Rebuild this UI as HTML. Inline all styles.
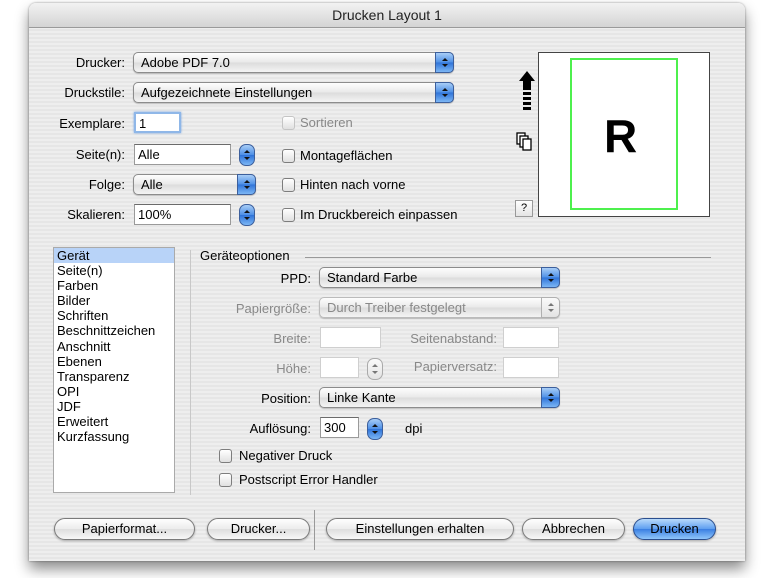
<!DOCTYPE html>
<html><head><meta charset="utf-8"><style>
*{margin:0;padding:0;box-sizing:border-box}
body{width:770px;height:578px;background:#fff;position:relative;overflow:hidden;font-family:"Liberation Sans",sans-serif;font-size:13px;color:#000}
.win{position:absolute;left:29px;top:3px;width:716px;height:558px;border-radius:7px 7px 0 0;background:repeating-linear-gradient(#eeeeee 0 2px,#e6e6e6 2px 4px);box-shadow:0 8px 14px rgba(0,0,0,.45),0 0 2px rgba(0,0,0,.4);overflow:hidden}
.tb{position:absolute;left:0;top:0;width:100%;height:25px;background:linear-gradient(#f2f2f2,#d4d4d4);border-bottom:1px solid #9a9a9a;text-align:center;font-size:14px;line-height:25px;color:#222}
.a{position:absolute;white-space:nowrap}
.l{position:absolute;text-align:right;white-space:nowrap;line-height:16px}
.pop{position:absolute;height:21px;border:1px solid #8c8c8c;border-radius:5px;background:linear-gradient(#fdfdfd,#e9e9e9 50%,#dcdcdc 51%,#f4f4f4);padding-left:7px;line-height:19px;box-shadow:0 1px 1px rgba(0,0,0,.2)}
.pop .ar{position:absolute;right:-1px;top:-1px;width:19px;height:21px;border-radius:0 5px 5px 0;background:linear-gradient(#a8cdf7,#4d8fe6 50%,#2f73d8 51%,#7bb6f5);border:1px solid #3c5f9c}
.ar:before,.ar:after{content:"";position:absolute;left:6px;border-left:3px solid transparent;border-right:3px solid transparent}
.ar:before{top:5px;border-bottom:3px solid #111}
.ar:after{top:11px;border-top:3px solid #111}
.dis{color:#888}
.dis .ar{background:linear-gradient(#fafafa,#e3e3e3);border-color:#b0b0b0}
.dis .ar:before{border-bottom-color:#777}.dis .ar:after{border-top-color:#777}
.pop.dis{border-color:#bbb}
.fld{position:absolute;height:21px;background:#fff;border:1px solid #9a9a9a;border-top-color:#6b6b6b;padding-left:3px;line-height:19px}
.fld.d{border-color:#cfcfcf}
.st{position:absolute;width:16px;height:22px;border:1px solid #3c5f9c;border-radius:7px;background:linear-gradient(#a8cdf7,#4d8fe6 50%,#2f73d8 51%,#7bb6f5)}
.st:before,.st:after{content:"";position:absolute;left:4px;border-left:3px solid transparent;border-right:3px solid transparent}
.st:before{top:5px;border-bottom:3px solid #111}.st:after{top:12px;border-top:3px solid #111}
.st.d{border-color:#aaa;background:linear-gradient(#fafafa,#e3e3e3)}
.st.d:before{border-bottom-color:#777}.st.d:after{border-top-color:#777}
.cb{position:absolute;width:13px;height:14px;border:1px solid #7d7d7d;border-radius:3px;background:linear-gradient(#fff,#e0e0e0)}
.cb.d{border-color:#c4c4c4}
.btn{position:absolute;height:22px;border:1px solid #7a7a7a;border-radius:11px;background:linear-gradient(#fefefe,#ececec 50%,#dedede 51%,#f8f8f8);text-align:center;line-height:20px;font-size:13px;box-shadow:0 1px 2px rgba(0,0,0,.3)}
.btn.p{background:linear-gradient(#b9dafb,#5d9ef0 50%,#3a7fe2 51%,#8fc6fb);border-color:#2b4e8e}
.list{position:absolute;left:24px;top:244px;width:122px;height:246px;background:#fff;border:1px solid #aaa}
.list div{height:15.1px;line-height:15px;padding-left:3px}
</style></head><body>
<div class="win">
<div class="tb">Drucken Layout 1</div>

<div class="l" style="left:0;width:96px;top:52px">Drucker:</div>
<div class="pop" style="left:104px;top:49px;width:321px">Adobe PDF 7.0<span class="ar"></span></div>
<div class="l" style="left:0;width:96px;top:82px">Druckstile:</div>
<div class="pop" style="left:104px;top:79px;width:321px">Aufgezeichnete Einstellungen<span class="ar"></span></div>

<div class="l" style="left:0;width:96px;top:113px">Exemplare:</div>
<div class="fld" style="left:105px;top:109px;width:47px;border:2px solid #8fb7e8;box-shadow:0 0 2px #6fa0e0">1</div>
<div class="cb d" style="left:253px;top:113px"></div><div class="a dis" style="left:271px;top:112px">Sortieren</div>

<div class="l" style="left:0;width:96px;top:144px">Seite(n):</div>
<div class="fld" style="left:105px;top:141px;width:97px">Alle</div>
<div class="st" style="left:210px;top:141px"></div>
<div class="cb" style="left:253px;top:146px"></div><div class="a" style="left:271px;top:145px">Montageflächen</div>

<div class="l" style="left:0;width:96px;top:174px">Folge:</div>
<div class="pop" style="left:104px;top:171px;width:123px">Alle<span class="ar"></span></div>
<div class="cb" style="left:253px;top:175px"></div><div class="a" style="left:271px;top:174px">Hinten nach vorne</div>

<div class="l" style="left:0;width:96px;top:204px">Skalieren:</div>
<div class="fld" style="left:105px;top:201px;width:97px">100%</div>
<div class="st" style="left:210px;top:201px"></div>
<div class="cb" style="left:253px;top:205px"></div><div class="a" style="left:271px;top:204px">Im Druckbereich einpassen</div>

<!-- preview -->
<svg class="a" style="left:489px;top:68px" width="20" height="42"><path d="M9 0 L1 10 H5 V19 H13 V10 H17 Z" fill="#000"/><rect x="5" y="21" width="8" height="3"/><rect x="5" y="26" width="8" height="3"/><rect x="5" y="31" width="8" height="3"/><rect x="5" y="36" width="8" height="3"/></svg>
<svg class="a" style="left:487px;top:129px" width="18" height="20"><rect x="1" y="1" width="8" height="11" fill="#fff" stroke="#000" stroke-width="1.3"/><rect x="4" y="4" width="8" height="11" fill="#fff" stroke="#000" stroke-width="1.3"/><rect x="7" y="7" width="8" height="11" fill="#fff" stroke="#000" stroke-width="1.3"/></svg>
<div class="a" style="left:486px;top:197px;width:18px;height:17px;border:1px solid #999;background:linear-gradient(#fff,#e4e4e4);text-align:center;font-size:11px;line-height:15px">?</div>
<div class="a" style="left:509px;top:49px;width:172px;height:165px;background:#fff;border:1px solid #444"></div>
<div class="a" style="left:541px;top:55px;width:108px;height:152px;border:2px solid #4df04d"></div>
<div class="a" style="left:575px;top:108px;font-size:46px;font-weight:bold;line-height:50px">R</div>

<!-- lower -->
<div class="list">
<div style="background:#b8d3f8">Gerät</div><div>Seite(n)</div><div>Farben</div><div>Bilder</div><div>Schriften</div><div>Beschnittzeichen</div><div>Anschnitt</div><div>Ebenen</div><div>Transparenz</div><div>OPI</div><div>JDF</div><div>Erweitert</div><div>Kurzfassung</div>
</div>
<div class="a" style="left:161px;top:247px;width:1px;height:245px;background:#c8c8c8"></div>
<div class="a" style="left:171px;top:245px">Geräteoptionen</div>
<div class="a" style="left:276px;top:254px;width:406px;height:1px;background:#999"></div>

<div class="l" style="left:150px;width:132px;top:268px">PPD:</div>
<div class="pop" style="left:290px;top:264px;width:241px">Standard Farbe<span class="ar"></span></div>
<div class="l dis" style="left:150px;width:132px;top:298px">Papiergröße:</div>
<div class="pop dis" style="left:290px;top:294px;width:241px">Durch Treiber festgelegt<span class="ar"></span></div>
<div class="l dis" style="left:150px;width:132px;top:328px">Breite:</div>
<div class="fld d" style="left:291px;top:324px;width:61px"></div>
<div class="l dis" style="left:340px;width:128px;top:328px">Seitenabstand:</div>
<div class="fld d" style="left:474px;top:324px;width:56px"></div>
<div class="l dis" style="left:150px;width:132px;top:358px">Höhe:</div>
<div class="fld d" style="left:291px;top:354px;width:39px"></div>
<div class="st d" style="left:338px;top:355px;width:16px"></div>
<div class="l dis" style="left:340px;width:128px;top:356px">Papierversatz:</div>
<div class="fld d" style="left:474px;top:354px;width:56px"></div>
<div class="l" style="left:150px;width:132px;top:388px">Position:</div>
<div class="pop" style="left:290px;top:384px;width:241px">Linke Kante<span class="ar"></span></div>
<div class="l" style="left:150px;width:132px;top:418px">Auflösung:</div>
<div class="fld" style="left:291px;top:414px;width:39px">300</div>
<div class="st" style="left:338px;top:415px"></div>
<div class="a" style="left:376px;top:418px">dpi</div>
<div class="cb" style="left:190px;top:446px"></div><div class="a" style="left:210px;top:445px">Negativer Druck</div>
<div class="cb" style="left:190px;top:470px"></div><div class="a" style="left:210px;top:469px">Postscript Error Handler</div>

<div class="btn" style="left:25px;top:515px;width:141px">Papierformat...</div>
<div class="btn" style="left:178px;top:515px;width:103px">Drucker...</div>
<div class="a" style="left:285px;top:507px;width:1px;height:40px;background:#999"></div>
<div class="btn" style="left:297px;top:515px;width:188px">Einstellungen erhalten</div>
<div class="btn" style="left:493px;top:515px;width:103px">Abbrechen</div>
<div class="btn p" style="left:604px;top:515px;width:83px">Drucken</div>
</div>
</body></html>
